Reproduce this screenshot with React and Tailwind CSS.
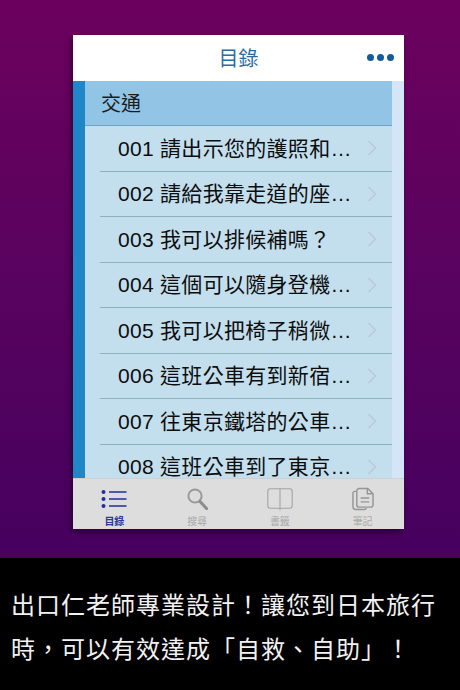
const FONT = "font-['Liberation_Sans','Noto_Sans_CJK_TC',sans-serif]";

const rows = [
  "001 請出示您的護照和…",
  "002 請給我靠走道的座…",
  "003 我可以排候補嗎？",
  "004 這個可以隨身登機…",
  "005 我可以把椅子稍微…",
  "006 這班公車有到新宿…",
  "007 往東京鐵塔的公車…",
  "008 這班公車到了東京…",
];

function ListIcon() {
  return (
    <svg width="26" height="18" viewBox="0 0 26 18" fill="none">
      <g fill="#1f2f9e">
        <circle cx="2.5" cy="2" r="2" />
        <circle cx="2.5" cy="9" r="2" />
        <circle cx="2.5" cy="16" r="2" />
      </g>
      <g stroke="#1f2f9e" strokeWidth="1.6">
        <path d="M8 2h17.500M8 9h17.500M8 16h17.500" />
      </g>
    </svg>
  );
}

function SearchIcon() {
  return (
    <svg width="21" height="22" viewBox="0 0 21 22" fill="none">
      <circle cx="8" cy="8" r="6.600" stroke="#9a9a9a" strokeWidth="2" />
      <path d="M13 13.500L19.500 20.500" stroke="#8e8e8e" strokeWidth="3.200" strokeLinecap="round" />
    </svg>
  );
}

function BookIcon() {
  return (
    <svg width="26" height="23" viewBox="0 0 26 23" fill="none" stroke="#a4a4a4" strokeWidth="1.100">
      <rect x="0.800" y="0.800" width="24.400" height="19.500" rx="2.500" />
      <path d="M13 0.800v21.500" />
    </svg>
  );
}

function NoteIcon() {
  return (
    <svg width="22" height="24" viewBox="0 0 23 24" fill="none" stroke="#969696" strokeWidth="1.500">
      <path d="M4.500 4H3a2 2 0 0 0-2 2v14a3 3 0 0 0 3 3h9a2 2 0 0 0 2-1.500" />
      <path d="M7.500 1h9l5.500 5.500V18a2.500 2.500 0 0 1-2.500 2.500H7.500A2.500 2.500 0 0 1 5 18V3.500A2.500 2.500 0 0 1 7.500 1z" />
      <path d="M16 1.500v5h5.500M9 11h9M9 15h9" />
    </svg>
  );
}

function Tab({ icon, label, active }) {
  return (
    <div className="flex-1 flex flex-col items-center pt-[8px]">
      <div className="h-[24px] flex items-center justify-center">{icon}</div>
      <div className={`mt-[5px] text-[10px] leading-[12px] ${active ? "text-[#2a379e] font-bold" : "text-[#a8a8a8]"}`}>{label}</div>
    </div>
  );
}

export default function App() {
  return (
    <div className={`w-[460px] h-[690px] flex flex-col overflow-hidden ${FONT}`}>
      <div className="h-[558px] pt-[35px] pl-[73px] bg-gradient-to-b from-[#6c005e] to-[#46005f]">
        <div className="w-[331px] h-[494px] flex flex-col bg-white shadow-[-2px_3px_6px_rgba(0,0,0,0.45)]">
          <div className="h-[46px] shrink-0 bg-white relative flex items-center justify-center pt-[2px]">
            <span className="text-[20px] text-[#2c6c9f]">目錄</span>
            <div className="absolute right-[10px] top-[19px] flex gap-[3px]">
              <div className="w-[7px] h-[7px] rounded-full bg-[#145a9c]" />
              <div className="w-[7px] h-[7px] rounded-full bg-[#145a9c]" />
              <div className="w-[7px] h-[7px] rounded-full bg-[#145a9c]" />
            </div>
          </div>
          <div className="flex-1 min-h-0 flex overflow-hidden">
            <div className="w-[12px] shrink-0 bg-[#1f86c8]" />
            <div className="flex-1 min-w-0 bg-[#c3dfee]">
              <div className="h-[45px] pl-[16px] pt-[2px] flex items-center bg-[#91c4e5] border-b border-[#6ea4c8] text-[20px] text-[#1c1c1c]">交通</div>
              <div className="pl-[15px]">
                {rows.map((r) => (
                  <div key={r} className="h-[45.500px] flex items-center justify-between pl-[18px] pr-[15px] border-b border-[#8fb0be]">
                    <span className="text-[21px] tracking-[0.300px] text-[#0d0d0d] whitespace-nowrap">{r}</span>
                    <svg width="10" height="16" viewBox="0 0 10 16" fill="none" stroke="#bcc8d8" strokeWidth="1.500">
                      <path d="M1.500 1l7 7-7 7" />
                    </svg>
                  </div>
                ))}
              </div>
            </div>
            <div className="w-[12px] shrink-0 bg-[#d3e5f6]" />
          </div>
          <div className="h-[51px] shrink-0 flex bg-[#dedddd] border-t border-[#cfd0d0]">
            <Tab icon={<ListIcon />} label="目錄" active />
            <Tab icon={<SearchIcon />} label="搜尋" />
            <Tab icon={<BookIcon />} label="書籤" />
            <Tab icon={<NoteIcon />} label="筆記" />
          </div>
        </div>
      </div>
      <div className="flex-1 bg-black pl-[11px] pr-[10px] pt-[24px] text-[24px] leading-[44px] tracking-[1px] text-[#f2f2f2] font-['Noto_Sans_CJK_TC',sans-serif]">
        出口仁老師專業設計！讓您到日本旅行時，可以有效達成「自救、自助」！
      </div>
    </div>
  );
}
